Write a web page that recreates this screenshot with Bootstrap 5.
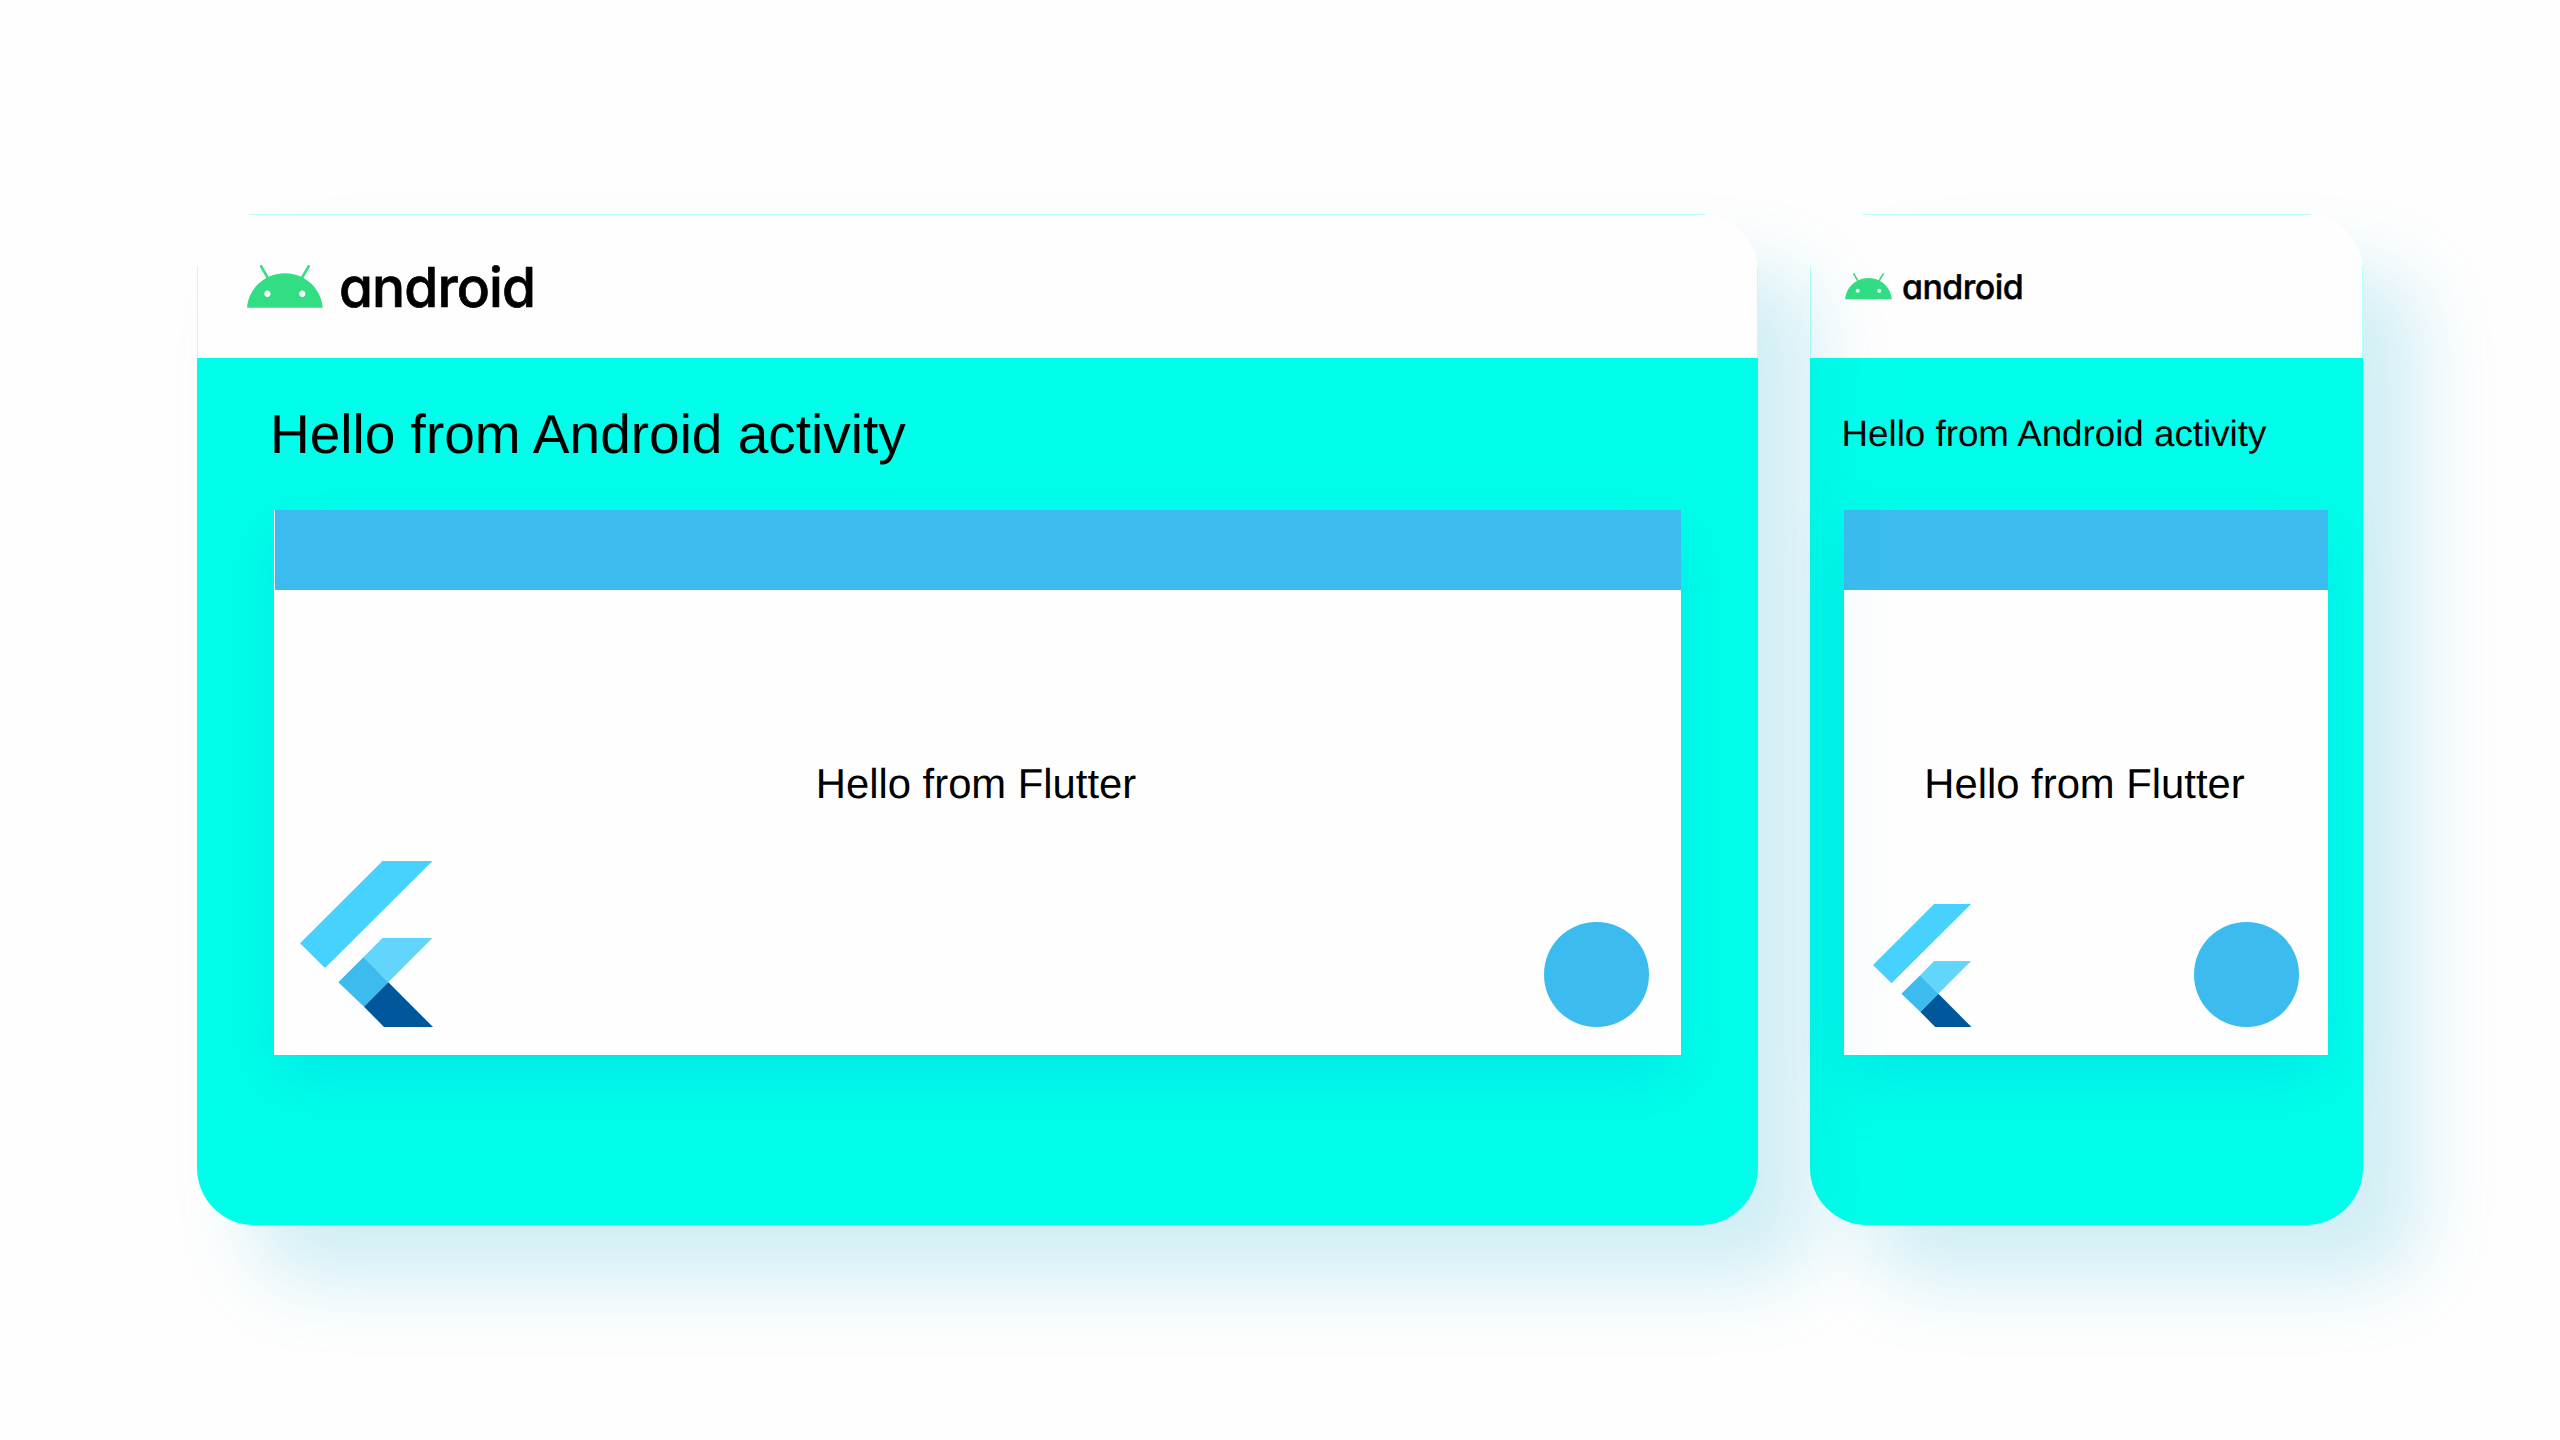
<!DOCTYPE html>
<html lang="en">
<head>
<meta charset="utf-8">
<meta name="viewport" content="width=device-width, initial-scale=1">
<title>Add Flutter to Android</title>
<link href="https://cdn.jsdelivr.net/npm/bootstrap@5.3.0/dist/css/bootstrap.min.css" rel="stylesheet">
<style>
  body { background: #fefefe; color: #000; font-family: "Liberation Sans", Arial, sans-serif; line-height: 1; text-rendering: geometricPrecision; }
  .stage { width: 2560px; height: 1440px; padding: 214px 197px 0 197px; gap: 52px; }
  .device {
    height: 1011px; border-radius: 57px;
    background: linear-gradient(#fefefe 144px, #00ffea 144px);
    box-shadow: 56px 56px 78px rgba(0,168,208,.185);
  }
  .device-wide { width: 1561px; z-index: 2; padding-right: 77px; }
  .device-narrow { width: 553px; z-index: 1; padding-right: 35px; }
  .device-head {
    height: 144px;
    background:
      linear-gradient(#b8fffa,#b8fffa) 52px 0 / calc(100% - 104px) 1px no-repeat,
      linear-gradient(#b8fffa,#b8fffa) 0 52px / 1px 100% no-repeat,
      linear-gradient(#b8fffa,#b8fffa) 100% 52px / 1px 100% no-repeat;
  }
  .device-wide .device-head { margin-right: -77px; padding: 51px 0 0 50px; }
  .device-narrow .device-head { margin-right: -35px; padding: 59px 0 0 34.6px; }
  .device-title { height: 152px; white-space: nowrap; }
  .device-wide .device-title { font-size: 55px; padding: 48.5px 0 0 73px; }
  .device-narrow .device-title { font-size: 36.75px; padding: 58px 0 0 31.5px; }
  .flutter-view { height: 545px; background: #fefefe; box-shadow: 0 22px 58px rgba(0,170,220,.28); }
  .device-wide .flutter-view { margin-left: 77px; }
  .device-narrow .flutter-view { margin-left: 34px; }
  .app-strip { height: 80px; background: #3cbcee; }
  .device-wide .app-strip { margin-left: 1px; }
  .view-label { font-size: 41.8px; padding: 173px 3px 0 0; height: 252px; white-space: nowrap; }
  .view-foot { height: 185px; }
  .device-wide .view-foot { padding: 0 32px 0 26px; }
  .device-narrow .view-foot { padding: 0 29.5px 0 28.7px; }
  .fab-dot { width: 104.6px; height: 104.6px; background: #3cbcee; }
  .wordmark { font-family: Inter, sans-serif; font-weight: 500; font-size: 55px; font-feature-settings: "cv11"; stroke: #000; stroke-width: .7; }
  svg { display: block; overflow: visible; }
</style>
</head>
<body class="overflow-hidden">
<svg width="0" height="0" class="position-absolute" aria-hidden="true">
  <symbol id="android-head" viewBox="0 0 76 43">
    <path fill="#32de84" transform="translate(0 -16.5) scale(3.156)" d="M17.523 15.3414c-.5511 0-.9993-.4486-.9993-.9997s.4483-.9993.9993-.9993c.5511 0 .9993.4483.9993.9993.0001.5511-.4482.9997-.9993.9997m-11.046 0c-.5511 0-.9993-.4486-.9993-.9997s.4482-.9993.9993-.9993c.5511 0 .9993.4483.9993.9993 0 .5511-.4483.9997-.9993.9997m11.4045-6.02l1.9973-3.4592a.416.416 0 00-.1521-.5676.416.416 0 00-.5676.1521l-2.0223 3.503C15.5902 8.2439 13.8533 7.8508 12 7.8508s-3.5902.3931-5.1367 1.0989L4.841 5.4467a.4161.4161 0 00-.5677-.1521.4157.4157 0 00-.1521.5676l1.9973 3.4592C2.6889 11.1867.3432 14.6589 0 18.761h24c-.3435-4.1021-2.6892-7.5743-6.1185-9.4396"/>
  </symbol>
  <symbol id="flutter-logo" viewBox="0 0 133 166">
    <path fill="#47d1ff" d="M82.5 0h50L25 107 0 82.3z"/>
    <path fill="#62d5fd" d="M82.5 77h50L88.3 121.3 63.7 96z"/>
    <path fill="#3cbcee" d="M63.7 96l24.6 25.3L64 145.7 38.3 121.3z"/>
    <path fill="#01579b" d="M88.3 121.3L133 166H84L64 145.7z"/>
  </symbol>
</svg>

<main class="stage d-flex align-items-start">
  <section class="device device-wide position-relative flex-shrink-0">
    <header class="device-head">
      <svg width="286" height="43" viewBox="0 0 286 43">
        <use href="#android-head" width="76" height="43"/>
        <text class="wordmark" x="92" y="42" textLength="197" lengthAdjust="spacing">android</text>
      </svg>
    </header>
    <div class="device-title">Hello from Android activity</div>
    <div class="flutter-view d-flex flex-column">
      <div class="app-strip"></div>
      <div class="view-label text-center">Hello from Flutter</div>
      <div class="view-foot d-flex justify-content-between align-items-end">
        <svg width="133" height="166"><use href="#flutter-logo"/></svg>
        <div class="fab-dot rounded-circle"></div>
      </div>
    </div>
  </section>

  <section class="device device-narrow position-relative flex-shrink-0">
    <header class="device-head">
      <svg width="177" height="26.6" viewBox="0 0 286 43">
        <use href="#android-head" width="76" height="43"/>
        <text class="wordmark" x="92" y="42" textLength="197" lengthAdjust="spacing">android</text>
      </svg>
    </header>
    <div class="device-title">Hello from Android activity</div>
    <div class="flutter-view d-flex flex-column">
      <div class="app-strip"></div>
      <div class="view-label text-center">Hello from Flutter</div>
      <div class="view-foot d-flex justify-content-between align-items-end">
        <svg width="98.5" height="123"><use href="#flutter-logo"/></svg>
        <div class="fab-dot rounded-circle"></div>
      </div>
    </div>
  </section>
</main>
<script src="https://cdn.jsdelivr.net/npm/bootstrap@5.3.0/dist/js/bootstrap.bundle.min.js"></script>
</body>
</html>
